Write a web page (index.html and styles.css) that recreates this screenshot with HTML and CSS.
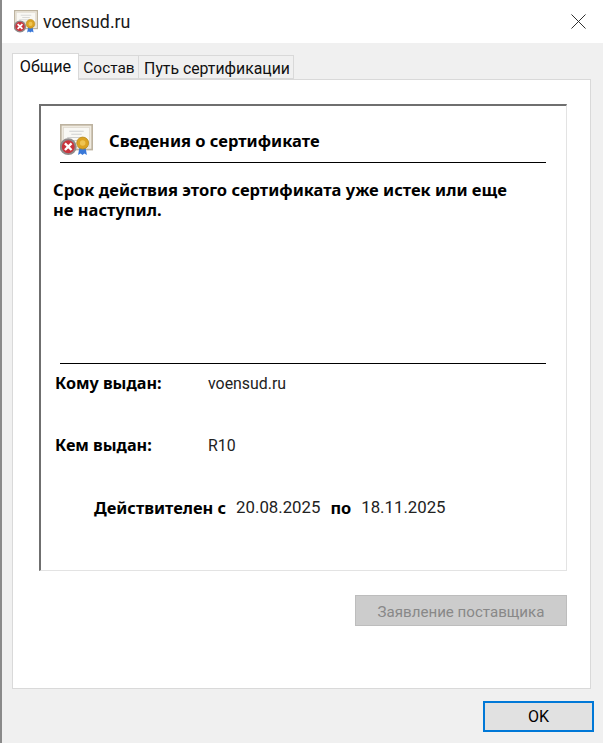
FILE: index.html
```html
<!DOCTYPE html>
<html lang="ru">
<head>
<meta charset="utf-8">
<title>voensud.ru</title>
<link rel="stylesheet" href="styles.css">
</head>
<body>
<svg class="defs" width="0" height="0" aria-hidden="true">
  <defs>
    <symbol id="cert" viewBox="0 0 32 32">
      <rect x=".8" y=".8" width="30.4" height="24" fill="#efeadf" stroke="#bdb3a0" stroke-width="1.6"/>
      <rect x="3.500" y="3.500" width="25" height="18.500" fill="#f9f8f4" stroke="#ddd8cc" stroke-width=".7"/>
      <path d="M9 7h14M11 10h10M7 13h15M7 16h10" stroke="#cfcfcf" stroke-width="1"/>
      <path d="M19 22l-1.500 8 2.500-1.500 1.800 1.500 1.800-1.500 2.500 1.500-1.500-8z" fill="#3a78d8"/>
      <circle cx="22" cy="18.500" r="5.800" fill="#dca322" stroke="#b98a1e" stroke-width=".8"/>
      <circle cx="22" cy="18.500" r="2.700" fill="#efc451"/>
      <circle cx="8" cy="22" r="7.200" fill="#c9343c" stroke="#8f8a8a" stroke-width="1.900"/>
      <path d="M4.800 18.800l6.400 6.400M11.200 18.800l-6.400 6.400" stroke="#fff" stroke-width="2.300"/>
    </symbol>
  </defs>
</svg>
<div class="window">
  <header class="titlebar">
    <svg class="title-icon"><use href="#cert"/></svg>
    <span class="title-text">voensud.ru</span>
    <svg class="close" viewBox="0 0 16 16"><path d="M.5.5l15 15M15.500.5l-15 15" stroke="#222" stroke-width="1" fill="none"/></svg>
  </header>
  <main class="body">
    <nav class="tabs">
      <div class="tab active">Общие</div>
      <div class="tab second">Состав</div>
      <div class="tab third">Путь сертификации</div>
    </nav>
    <section class="panel">
      <div class="box">
        <div class="head">
          <svg class="head-icon"><use href="#cert"/></svg>
          <h1 class="head-title">Сведения о сертификате</h1>
        </div>
        <p class="message">Срок действия этого сертификата уже истек или еще не наступил.</p>
        <div class="info">
          <div class="row issued-to"><span class="label">Кому выдан:</span><span class="value">voensud.ru</span></div>
          <div class="row issued-by"><span class="label">Кем выдан:</span><span class="value">R10</span></div>
          <div class="validity"><b>Действителен с</b><span>20.08.2025</span><b>по</b><span>18.11.2025</span></div>
        </div>
      </div>
      <div class="panel-actions"><button class="vendor" disabled>Заявление поставщика</button></div>
    </section>
    <footer class="footer"><button class="ok">OK</button></footer>
  </main>
</div>
</body>
</html>
```
FILE: styles.css
```css
* { box-sizing: border-box; }
html, body { margin: 0; height: 100%; }
body { font-family: "Noto Sans", "Open Sans", sans-serif; color: #000; background: #f0f0f0; overflow: hidden; }
.defs { position: absolute; }
.window { width: 603px; height: 743px; display: flex; flex-direction: column; border-left: 2px solid #8a8a8a; }
.titlebar { height: 43px; flex: none; background: #fff; display: flex; align-items: center; padding: 0 17px 0 12px; }
.title-icon { width: 24px; height: 24px; margin-right: 5px; }
.title-text { font-family: Roboto, sans-serif; font-size: 17.8px; color: #1a1a1a; flex: 1; }
.close { width: 15px; height: 15px; }
.body { flex: 1; display: flex; flex-direction: column; padding: 10px 12px 0 10px; }
.tabs { display: flex; height: 26px; align-items: flex-end; font-family: Roboto, sans-serif; font-size: 15.8px; color: #111; position: relative; z-index: 1; }
.tab { height: 24px; padding-top: 2px; border: 1px solid #d9d9d9; margin-left: -1px; display: flex; align-items: center; justify-content: center; background: #f0f0f0; }
.tab.active { width: 67px; height: 27px; padding-top: 0; background: #fff; border-bottom: 0; margin-left: 0; margin-bottom: -1px; padding-bottom: 2px; font-size: 16.2px; }
.tab.second { width: 61px; font-size: 15.4px; padding-left: 1px; }
.tab.third { width: 156px; padding-left: 2px; }
.panel { height: 610px; background: #fff; border: 1px solid #d9d9d9; padding: 24px 23px 0 26px; display: flex; flex-direction: column; }
.box { height: 467px; flex: none; border: 1px solid #e3e3e3; border-top: 2px solid #6f6f6f; border-left: 2px solid #6f6f6f; padding: 0 20px 0 19px; display: flex; flex-direction: column; }
.head { height: 57px; flex: none; border-bottom: 1px solid #000; display: flex; align-items: center; padding-top: 13px; }
.head-icon { width: 33px; height: 33px; flex: none; margin-right: 16px; }
.head-title { margin: 0; font-size: 16.5px; font-weight: 700; }
.message { margin: 17px 0 0 -7px; width: 470px; font-size: 16.5px; font-weight: 700; line-height: 20px; }
.info { margin-top: 143px; border-top: 1px solid #000; font-size: 16.2px; }
.row { display: flex; align-items: center; margin-left: -5px; }
.issued-to { margin-top: 9px; height: 20px; }
.issued-by { margin-top: 42px; height: 20px; }
.label { width: 153px; font-weight: 700; }
.value { font-family: Roboto, sans-serif; font-size: 15.9px; color: #222; }
.validity { margin: 42px 0 0 34px; display: flex; gap: 10px; height: 20px; align-items: center; white-space: nowrap; font-family: Roboto, sans-serif; font-size: 16.8px; color: #222; }
.validity b { font-family: "Noto Sans", sans-serif; font-size: 16.4px; color: #000; }
.panel-actions { display: flex; justify-content: flex-end; margin-top: 24px; }
.vendor { width: 212px; height: 31px; padding: 2px 0 0; background: #cccccc; border: 1px solid #bdbdbd; color: #888; font-family: Roboto, sans-serif; font-size: 15.1px; }
.footer { display: flex; justify-content: flex-end; padding-top: 12px; margin-right: -3px; }
.ok { width: 111px; height: 31px; background: #e1e1e1; border: 2px solid #0078d7; font-family: Roboto, sans-serif; font-size: 16px; color: #000; padding: 0; }
```
